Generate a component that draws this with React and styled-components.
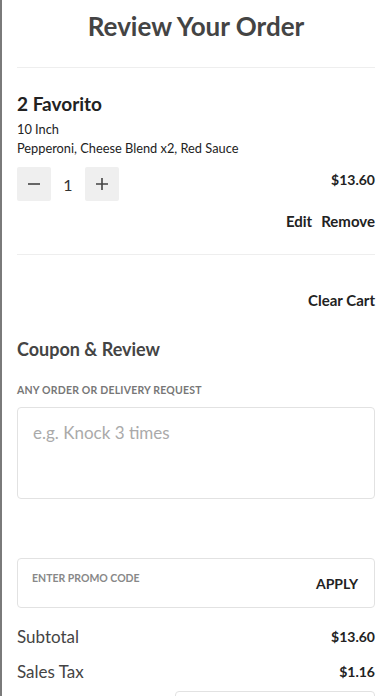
import React, { useState } from 'react'
import styled, { createGlobalStyle } from 'styled-components'

const GlobalStyle = createGlobalStyle`
  html, body {
    margin: 0;
    padding: 0;
    background: #fff;
  }
  body {
    font-family: Lato, "Open Sans", sans-serif;
    color: #222;
  }
  * { box-sizing: border-box; }
`

const Page = styled.div`
  width: 392px;
  height: 696px;
  overflow: hidden;
  border-left: 2px solid #7a7a7a;
  padding: 0 17px 0 15px;
`

const Title = styled.h1`
  margin: 0;
  padding-top: 10px;
  height: 68px;
  text-align: center;
  font-size: 26px;
  font-weight: 700;
  color: #444;
  border-bottom: 1px solid #eee;
`

const Item = styled.div`
  padding: 24px 0 24px;
  border-bottom: 1px solid #eee;
`

const ItemName = styled.h2`
  margin: 0;
  font-size: 19px;
  font-weight: 700;
  color: #222;
  line-height: 24px;
`

const Detail = styled.div`
  font-size: 12.8px;
  line-height: 19px;
  color: #222;
  margin-top: ${p => p.top || 0}px;
`

const Row = styled.div`
  display: flex;
  align-items: center;
  justify-content: space-between;
`

const Stepper = styled.div`
  display: flex;
  align-items: center;
  margin-top: 9px;
`

const StepButton = styled.button`
  width: 34px;
  height: 34px;
  border: none;
  border-radius: 2px;
  background: #efefef;
  display: flex;
  align-items: center;
  justify-content: center;
  padding: 0;
  cursor: pointer;
`

const Qty = styled.span`
  width: 34px;
  text-align: center;
  font-size: 16px;
  color: #333;
`

const Price = styled.span`
  font-size: 14px;
  font-weight: 700;
  color: #222;
`

const Actions = styled.div`
  display: flex;
  justify-content: flex-end;
  gap: 9px;
  margin-top: 11px;
`

const LinkButton = styled.span`
  font-size: 15px;
  font-weight: 700;
  color: #222;
  cursor: pointer;
`

const ClearRow = styled.div`
  display: flex;
  justify-content: flex-end;
  padding-top: 36px;
`

const SectionTitle = styled.h3`
  margin: 29px 0 0;
  font-size: 18px;
  font-weight: 700;
  color: #444;
`

const Label = styled.div`
  margin-top: 24px;
  font-size: 10.5px;
  font-weight: 700;
  color: #777;
  letter-spacing: 0.2px;
`

const TextArea = styled.textarea`
  display: block;
  width: 100%;
  height: 92px;
  margin-top: 11px;
  padding: 14px 15px;
  border: 1px solid #e2e2e2;
  border-radius: 4px;
  resize: none;
  font-family: inherit;
  font-size: 17px;
  color: #333;
  &::placeholder {
    color: #aaa;
  }
`

const PromoBox = styled.div`
  display: flex;
  justify-content: space-between;
  margin-top: 59px;
  height: 50px;
  border: 1px solid #e2e2e2;
  border-radius: 4px;
  padding: 0 16px 0 14px;
`

const PromoLabel = styled.span`
  font-size: 10.5px;
  font-weight: 700;
  color: #888;
  padding-top: 13px;
`

const Apply = styled.span`
  font-size: 14px;
  font-weight: 700;
  color: #222;
  align-self: center;
`

const SummaryRow = styled.div`
  display: flex;
  justify-content: space-between;
  align-items: center;
  height: 35px;
  margin-top: ${p => p.top || 0}px;
`

const SummaryLabel = styled.span`
  font-size: 17px;
  color: #444;
`

const NextBox = styled.div`
  margin: 2px 0 0 158px;
  height: 20px;
  border: 1px solid #e2e2e2;
  border-radius: 4px;
`

const Minus = () => (
  <svg width="16" height="16" viewBox="0 0 16 16">
    <path d="M2 8h12" stroke="#444" strokeWidth="1.6" />
  </svg>
)

const Plus = () => (
  <svg width="16" height="16" viewBox="0 0 16 16">
    <path d="M2 8h12M8 2v12" stroke="#444" strokeWidth="1.6" />
  </svg>
)

const App = () => {
  const [quantity, setQuantity] = useState(1)

  return (
    <>
      <GlobalStyle />
      <Page>
        <Title>Review Your Order</Title>
        <Item>
          <ItemName>2 Favorito</ItemName>
          <Detail top={4}>10 Inch</Detail>
          <Detail>Pepperoni, Cheese Blend x2, Red Sauce</Detail>
          <Row>
            <Stepper>
              <StepButton onClick={() => quantity > 1 && setQuantity(quantity - 1)}>
                <Minus />
              </StepButton>
              <Qty>{quantity}</Qty>
              <StepButton onClick={() => setQuantity(quantity + 1)}>
                <Plus />
              </StepButton>
            </Stepper>
            <Price>$13.60</Price>
          </Row>
          <Actions>
            <LinkButton>Edit</LinkButton>
            <LinkButton>Remove</LinkButton>
          </Actions>
        </Item>
        <ClearRow>
          <LinkButton>Clear Cart</LinkButton>
        </ClearRow>
        <SectionTitle>Coupon &amp; Review</SectionTitle>
        <Label>ANY ORDER OR DELIVERY REQUEST</Label>
        <TextArea placeholder="e.g. Knock 3 times" />
        <PromoBox>
          <PromoLabel>ENTER PROMO CODE</PromoLabel>
          <Apply>APPLY</Apply>
        </PromoBox>
        <SummaryRow top={11}>
          <SummaryLabel>Subtotal</SummaryLabel>
          <Price>$13.60</Price>
        </SummaryRow>
        <SummaryRow>
          <SummaryLabel>Sales Tax</SummaryLabel>
          <Price>$1.16</Price>
        </SummaryRow>
        <NextBox />
      </Page>
    </>
  )
}

export default App
